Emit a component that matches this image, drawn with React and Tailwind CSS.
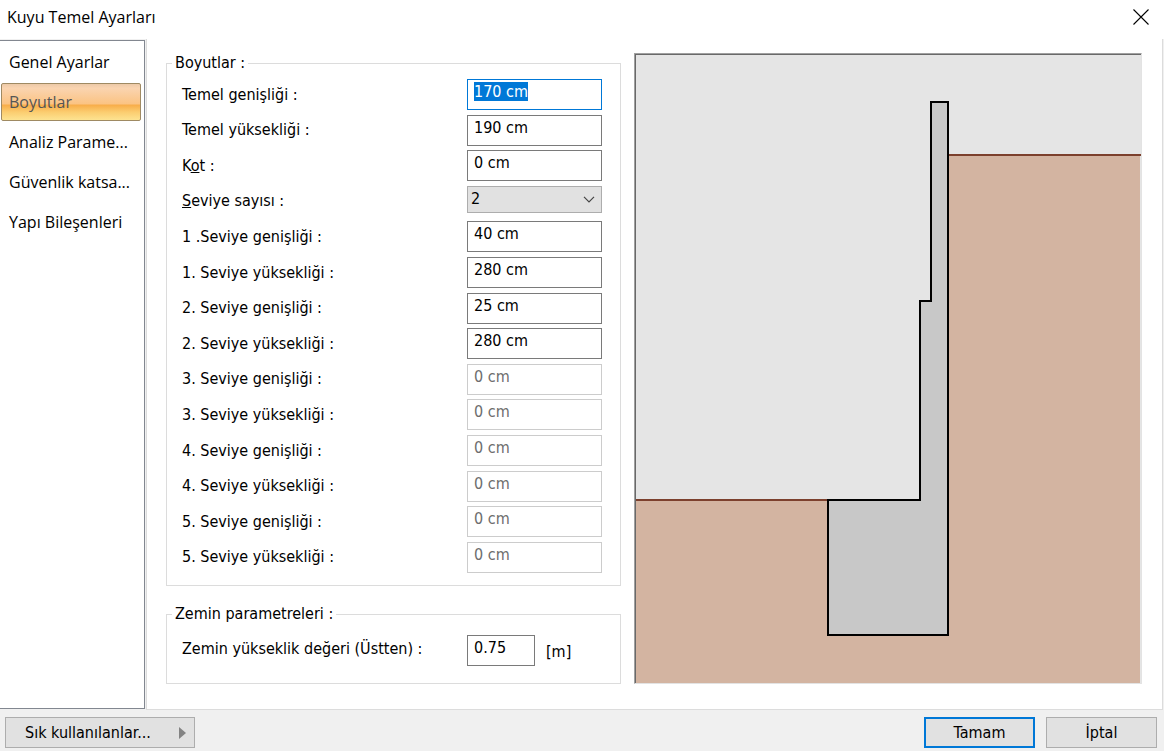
import { useEffect, useRef } from "react";

const pages = ["Genel Ayarlar", "Boyutlar", "Analiz Parame...", "Güvenlik katsa...", "Yapı Bileşenleri"];

const fields = [
  { id: "temel-genislik", label: "Temel genişliği :", value: "170 cm", selected: true },
  { id: "temel-yukseklik", label: "Temel yüksekliği :", value: "190 cm" },
  { id: "kot", label: <>K<u>o</u>t :</>, value: "0 cm" },
  { id: "seviye-sayisi", label: <><u>S</u>eviye sayısı :</>, value: "2", options: ["1", "2", "3", "4", "5"] },
  { id: "s1-genislik", label: "1 .Seviye genişliği :", value: "40 cm" },
  { id: "s1-yukseklik", label: "1. Seviye yüksekliği :", value: "280 cm" },
  { id: "s2-genislik", label: "2. Seviye genişliği :", value: "25 cm" },
  { id: "s2-yukseklik", label: "2. Seviye yüksekliği :", value: "280 cm" },
  { id: "s3-genislik", label: "3. Seviye genişliği :", value: "0 cm", disabled: true },
  { id: "s3-yukseklik", label: "3. Seviye yüksekliği :", value: "0 cm", disabled: true },
  { id: "s4-genislik", label: "4. Seviye genişliği :", value: "0 cm", disabled: true },
  { id: "s4-yukseklik", label: "4. Seviye yüksekliği :", value: "0 cm", disabled: true },
  { id: "s5-genislik", label: "5. Seviye genişliği :", value: "0 cm", disabled: true },
  { id: "s5-yukseklik", label: "5. Seviye yüksekliği :", value: "0 cm", disabled: true },
];

const inputStyle =
  "h-[31px] rounded-none border border-[#7a7a7a] bg-white pt-0.5 pr-1 pb-2 pl-1.5 leading-[19px] outline-none selection:bg-[#0078d7] selection:text-white focus:border-[#0078d7] disabled:border-[#cccccc] disabled:text-[#6d6d6d]";

function TextField({ id, value, disabled, selected, width }) {
  const ref = useRef(null);
  useEffect(() => {
    if (selected) {
      ref.current.focus();
      ref.current.select();
    }
  }, [selected]);
  return <input ref={ref} id={id} type="text" defaultValue={value} disabled={disabled} className={`${inputStyle} ${width}`} />;
}

function SelectField({ id, value, options }) {
  return (
    <div className="grid w-[135px] self-start">
      <select
        id={id}
        defaultValue={value}
        className="col-start-1 row-start-1 h-[27px] w-full appearance-none rounded-none border border-[#adadad] bg-[#e1e1e1] px-[3px] outline-none"
      >
        {options.map((o) => (
          <option key={o}>{o}</option>
        ))}
      </select>
      <svg
        aria-hidden="true"
        viewBox="0 0 12 7"
        className="pointer-events-none col-start-1 row-start-1 mr-[7px] h-[7px] w-3 self-center justify-self-end"
      >
        <path d="M1 0.8 L6 5.8 L11 0.8" fill="none" stroke="#444" strokeWidth="1.2" />
      </svg>
    </div>
  );
}

function Group({ title, className, children }) {
  return (
    <fieldset className={`flex min-w-0 flex-col border border-[#dcdcdc] ${className}`}>
      <legend className="ml-[5px] px-[3px] leading-5">{title}</legend>
      {children}
    </fieldset>
  );
}

function SectionDrawing() {
  return (
    <div className="flex min-w-0 flex-1 border border-t-[#a0a0a0] border-r-[#e3e3e3] border-b-[#e3e3e3] border-l-[#a0a0a0]">
      <div className="min-w-0 flex-1 border-t border-l border-[#696969] bg-[#e5e5e5]">
        <svg role="img" aria-label="Kuyu temel kesiti" viewBox="0 0 505 628" preserveAspectRatio="none" className="block size-full">
          <rect x="312" y="100" width="192" height="528" fill="#d3b4a1" />
          <rect x="0" y="445" width="313" height="183" fill="#d3b4a1" />
          <path d="M312 100 H505 M0 445 H192" stroke="#7c402d" strokeWidth="2" />
          <path d="M295 47 H312 V580 H192 V445 H284 V246 H295 Z" fill="#c8c8c8" stroke="#000" strokeWidth="2" />
        </svg>
      </div>
    </div>
  );
}

export default function App() {
  return (
    <div className="flex min-h-screen flex-col bg-[#f0f0f0] font-['DejaVu_Sans_Condensed','Noto_Sans',sans-serif] text-[16px] leading-5 text-black">
      <header className="flex h-[39px] items-center justify-between bg-white pr-2 pb-1.5 pl-[7px] font-['Open_Sans',sans-serif]">
        <h1>Kuyu Temel Ayarları</h1>
        <button type="button" aria-label="Kapat" className="p-[7px]">
          <svg viewBox="0 0 16 16" className="size-4">
            <path d="M0.5 0.5 L15.5 15.5 M15.5 0.5 L0.5 15.5" stroke="#000" strokeWidth="1.1" />
          </svg>
        </button>
      </header>

      <div className="flex flex-1">
        <nav className="mt-px mr-px mb-px w-[145px] shrink-0 border-t border-r border-b border-[#828790] bg-white pt-0.5 pr-[3px] pl-px font-['Open_Sans',sans-serif]">
          <ul className="flex flex-col gap-0.5">
            {pages.map((page) => (
              <li key={page}>
                <button
                  type="button"
                  className={
                    page === "Boyutlar"
                      ? "block h-[38px] w-full rounded-[2px] border border-[#9f8a63] px-[7px] text-left whitespace-nowrap text-[#555555] [background-image:linear-gradient(to_bottom,#ecc9a8_0%,#fad4b0_12%,#fbc382_56%,#f8ac48_58%,#fbcd70_78%,#fde391_100%)]"
                      : "block h-[38px] w-full border border-transparent px-[7px] text-left whitespace-nowrap"
                  }
                >
                  {page}
                </button>
              </li>
            ))}
          </ul>
        </nav>

        <main className="mr-px flex min-w-0 flex-1 border-r border-b border-l border-[#dcdcdc] bg-white pt-[14px] pr-5 pb-[25px] pl-[19px]">
          <form className="mr-[13px] flex w-[455px] shrink-0 flex-col gap-[18px]">
            <Group title="Boyutlar :" className="flex-1">
              <div className="flex flex-1 flex-col justify-between gap-1 pt-1.5 pr-[18px] pb-3 pl-[15px]">
                {fields.map((f) => (
                  <div key={f.id} className="flex h-[31px] items-center justify-between">
                    <label htmlFor={f.id}>{f.label}</label>
                    {f.options ? <SelectField {...f} /> : <TextField {...f} width="w-[135px]" />}
                  </div>
                ))}
              </div>
            </Group>
            <Group title="Zemin parametreleri :" className="">
              <div className="flex pt-[11px] pr-[18px] pb-[17px] pl-[15px]">
                <label htmlFor="zemin-yukseklik" className="flex-1 pt-1">
                  Zemin yükseklik değeri (Üstten) :
                </label>
                <div className="flex w-[135px] items-end gap-[11px]">
                  <TextField id="zemin-yukseklik" value="0.75" width="w-[68px]" />
                  <span className="pb-1">[m]</span>
                </div>
              </div>
            </Group>
          </form>
          <SectionDrawing />
        </main>
      </div>

      <footer className="flex h-[41px] items-center gap-[11px] pr-[7px] pb-1 pl-[5px] pt-[8px]">
        <button type="button" className="mr-auto flex h-[31px] w-[190px] items-center justify-between border border-[#adadad] bg-[#e1e1e1] pr-2 pl-[19px]">
          Sık kullanılanlar...
          <svg aria-hidden="true" viewBox="0 0 7 12" className="h-3 w-[7px]">
            <path d="M0 0 L7 6 L0 12 Z" fill="#838383" />
          </svg>
        </button>
        <button type="button" className="h-[31px] w-[111px] border-2 border-[#0078d7] bg-[#e1e1e1]">Tamam</button>
        <button type="button" className="h-[31px] w-[111px] border border-[#adadad] bg-[#e1e1e1]">İptal</button>
      </footer>
    </div>
  );
}
